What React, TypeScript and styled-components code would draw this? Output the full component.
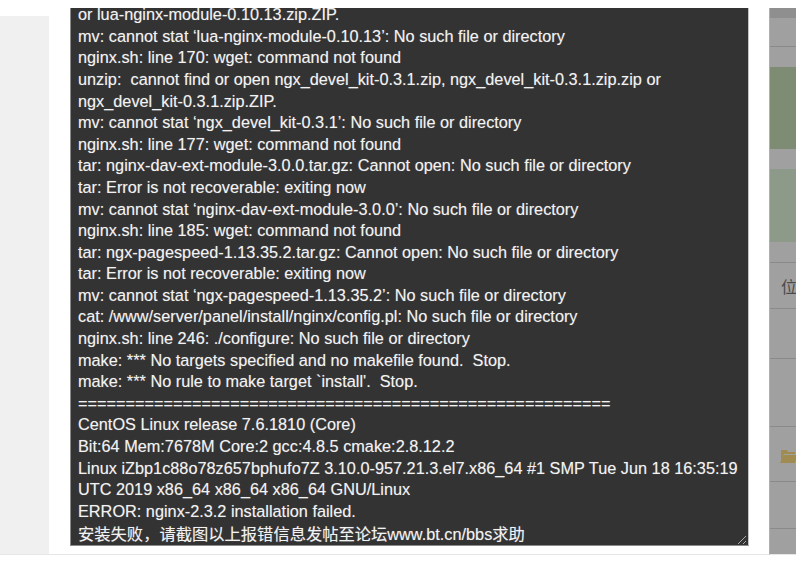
import React, { FC } from 'react';
import styled, { createGlobalStyle } from 'styled-components';

const GlobalStyle = createGlobalStyle`
  html, body {
    margin: 0;
    padding: 0;
    width: 796px;
    height: 564px;
    overflow: hidden;
    background: #fff;
  }
`;

const Page = styled.div`
  width: 796px;
  height: 564px;
  overflow: hidden;
  display: grid;
  grid-template-columns: 49px 720px 27px;
  padding-top: 8px;
  box-sizing: border-box;
`;

const LeftPane = styled.div`
  margin-top: 8px;
  height: 539px;
  box-sizing: border-box;
  background: #f0f0f0;
  border-bottom: 1px solid #e6e6e6;
`;

const Dialog = styled.div`
  height: 547px;
  padding: 0 20px 0 21px;
  box-sizing: border-box;
  background: #fff;
  border-bottom: 1px solid #e6e6e6;
`;

const Terminal = styled.div`
  height: 538px;
  box-sizing: border-box;
  padding: 0 0 1px 7px;
  position: relative;
  overflow: hidden;
  display: flex;
  flex-direction: column;
  justify-content: flex-end;
  background: #333;
  border-left: 1px solid #8a8a8a;
  border-right: 1px solid #c4c4c4;
  border-bottom: 1px solid #8a8a8a;
  color: #f2f2f2;
  font: 16.3px/21.6px "Liberation Sans", "Noto Sans CJK SC", sans-serif;
  text-shadow: 0 0 1px rgba(255, 255, 255, 0.35);
  white-space: pre;
`;

const LogLine = styled.div<{ $cjk?: boolean }>`
  height: 21.6px;
  flex-shrink: 0;
  ${(p) => (p.$cjk ? 'line-height: 25px;' : '')}
`;

const Grip = styled.svg`
  position: absolute;
  right: 0;
  bottom: 0;
`;

const Behind = styled.div`
  height: 547px;
  box-sizing: border-box;
  display: flex;
  flex-direction: column;
  background: #a0a0a0;
  border-left: 1px solid #b0b0b0;
  border-bottom: 1px solid #e6e6e6;
`;

const TopBand = styled.div`
  height: 10px;
  flex-shrink: 0;
  background: #8f8f8f;
`;

const Row = styled.div<{ $h: number; $line?: boolean }>`
  height: ${(p) => p.$h}px;
  flex-shrink: 0;
  display: flex;
  align-items: center;
  padding-left: 11px;
  box-sizing: border-box;
  white-space: nowrap;
  ${(p) => (p.$line ? 'border-bottom: 1px solid #8a8a8a;' : '')}
`;

const Banner = styled.div<{ $bg: string; $h: number }>`
  height: ${(p) => p.$h}px;
  flex-shrink: 0;
  background: ${(p) => p.$bg};
`;

const RowLabel = styled.span`
  font: 16px "Noto Sans CJK SC", sans-serif;
  color: #4a4a4a;
`;

const FolderIcon = styled.svg`
  flex-shrink: 0;
  margin: 4px 0 0 -1px;
`;

const lines = [
  'or lua-nginx-module-0.10.13.zip.ZIP.',
  'mv: cannot stat ‘lua-nginx-module-0.10.13’: No such file or directory',
  'nginx.sh: line 170: wget: command not found',
  'unzip:  cannot find or open ngx_devel_kit-0.3.1.zip, ngx_devel_kit-0.3.1.zip.zip or',
  'ngx_devel_kit-0.3.1.zip.ZIP.',
  'mv: cannot stat ‘ngx_devel_kit-0.3.1’: No such file or directory',
  'nginx.sh: line 177: wget: command not found',
  'tar: nginx-dav-ext-module-3.0.0.tar.gz: Cannot open: No such file or directory',
  'tar: Error is not recoverable: exiting now',
  'mv: cannot stat ‘nginx-dav-ext-module-3.0.0’: No such file or directory',
  'nginx.sh: line 185: wget: command not found',
  'tar: ngx-pagespeed-1.13.35.2.tar.gz: Cannot open: No such file or directory',
  'tar: Error is not recoverable: exiting now',
  'mv: cannot stat ‘ngx-pagespeed-1.13.35.2’: No such file or directory',
  'cat: /www/server/panel/install/nginx/config.pl: No such file or directory',
  'nginx.sh: line 246: ./configure: No such file or directory',
  'make: *** No targets specified and no makefile found.  Stop.',
  "make: *** No rule to make target `install'.  Stop.",
  '========================================================',
  'CentOS Linux release 7.6.1810 (Core)',
  'Bit:64 Mem:7678M Core:2 gcc:4.8.5 cmake:2.8.12.2',
  'Linux iZbp1c88o78z657bphufo7Z 3.10.0-957.21.3.el7.x86_64 #1 SMP Tue Jun 18 16:35:19',
  'UTC 2019 x86_64 x86_64 x86_64 GNU/Linux',
  'ERROR: nginx-2.3.2 installation failed.',
  '安装失败，请截图以上报错信息发帖至论坛www.bt.cn/bbs求助',
];

const App: FC = () => (
  <>
    <GlobalStyle />
    <Page>
      <LeftPane />
      <Dialog>
        <Terminal>
          {lines.map((line, i) => (
            <LogLine key={i} $cjk={i === lines.length - 1}>{line}</LogLine>
          ))}
          <Grip width="12" height="12" viewBox="0 0 12 12">
            <path d="M2 11 L10 3 M7 11 L10 8" stroke="#aaa" strokeWidth="1" fill="none" />
          </Grip>
        </Terminal>
      </Dialog>
      <Behind>
        <TopBand />
        <Row $h={29} $line />
        <Row $h={20} />
        <Banner $bg="#7d8c73" $h={82} />
        <Row $h={20} />
        <Banner $bg="#8d9a8a" $h={73} />
        <Row $h={21} $line />
        <Row $h={46} $line>
          <RowLabel>位</RowLabel>
        </Row>
        <Row $h={50} $line />
        <Row $h={68} $line />
        <Row $h={55} $line>
          <FolderIcon width="18" height="15" viewBox="0 0 18 15">
            <path d="M1 1h6l1 2h7v2H4L1 13z M4 6h14l-3 8H0z" fill="#a08c50" />
          </FolderIcon>
        </Row>
        <Row $h={47} $line />
      </Behind>
    </Page>
  </>
);

export default App;
